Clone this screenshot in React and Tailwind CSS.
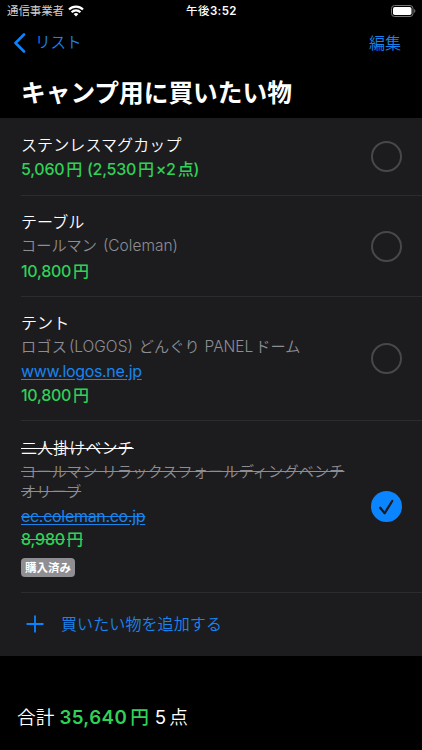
const items = [
  {
    height: 'h-[78px]',
    title: 'ステンレスマグカップ',
    price: [['5,060'], ['円', 'ml-[2px]'], ['(2,530', 'ml-[5px]'], ['円', 'ml-[2px]'], ['×2', 'ml-[2px]'], ['点', 'ml-[2px]'], [')']],
  },
  {
    height: 'h-[101px]',
    title: 'テーブル',
    note: [['コールマン'], ['(Coleman)', 'ml-[6px] text-[15.5px]']],
    price: [['10,800'], ['円', 'ml-[2px]']],
  },
  {
    height: 'h-[124px]',
    title: 'テント',
    note: [['ロゴス'], ['(LOGOS)', 'ml-[2px] text-[15.5px]'], ['どんぐり', 'ml-[6px]'], ['PANEL', 'ml-[5px] text-[15.5px]'], ['ドーム', 'ml-[2px]']],
    link: 'www.logos.ne.jp',
    price: [['10,800'], ['円', 'ml-[2px]']],
  },
]

const FONT = "font-['Inter','Noto_Sans_CJK_JP',sans-serif]"

function Parts({ parts }) {
  return parts.map(([text, gap = ''], i) => (
    <span key={i} className={gap}>{text}</span>
  ))
}

function Item({ item }) {
  return (
    <li className={`ml-[21px] pr-[20.5px] flex items-center justify-between border-b border-[#2c2c2f] ${item.height}`}>
      <div className="whitespace-nowrap pt-px text-[16px] leading-[24.2px]">
        <h2 className="font-[350] tracking-[0.1px] text-white">{item.title}</h2>
        {item.note && <p className="flex text-[15.2px] font-[350] text-[#8d8d93]"><Parts parts={item.note} /></p>}
        {item.link && <a className="block w-fit tracking-[-0.33px] text-[#1a84ee] underline underline-offset-2">{item.link}</a>}
        <p className="flex font-medium tracking-[-0.28px] text-[#30d158]"><Parts parts={item.price} /></p>
      </div>
      <span className="size-[31px] rounded-full border-2 border-[#48484a]" />
    </li>
  )
}

function BoughtItem() {
  return (
    <li className="ml-[21px] pr-[20.5px] h-[172px] flex items-center justify-between border-b border-[#2c2c2f]">
      <div className="whitespace-nowrap text-[16px] leading-[24px]">
        <h2 className="w-fit font-[350] tracking-[0.1px] text-white line-through">二人掛けベンチ</h2>
        <p className="w-fit pt-[2px] text-[15.2px] font-[350] leading-[20px] tracking-[0.08px] text-[#8d8d93] line-through">
          コールマン リラックスフォールディングベンチ<br />オリーブ
        </p>
        <a className="mt-[2px] block w-fit tracking-[-0.3px] text-[#1a84ee] [text-decoration:underline_line-through] underline-offset-2">ec.coleman.co.jp</a>
        <p className="-mt-px w-fit font-medium tracking-[-0.2px] text-[#30d158] line-through">8,980<span className="pl-[2px]">円</span></p>
        <span className="mt-[7px] flex h-[19px] w-[54px] items-center justify-center rounded-[4px] bg-[#8e8e93] text-[11.5px] font-bold text-white">購入済み</span>
      </div>
      <svg className="size-[31px]" viewBox="0 0 31 31" fill="none">
        <circle cx="15.5" cy="15.5" r="15.5" fill="#0a84ff" />
        <path d="M9.2 16.8 13.7 22.2 21.2 10" stroke="#1c1c1e" strokeWidth="2.3" strokeLinecap="round" strokeLinejoin="round" />
      </svg>
    </li>
  )
}

export default function App() {
  return (
    <main lang="ja" className={`flex h-[750px] w-[422px] flex-col overflow-hidden bg-black text-white ${FONT}`}>
      <div className="grid h-[22px] grid-cols-3 items-center pl-[7px] pr-[6px] text-[11.5px] leading-[22px]">
        <div className="flex items-center gap-[4px] text-[#d0d0d0]">
          <span className="tracking-[-0.1px]">通信事業者</span>
          <svg className="h-[12px] w-[16px]" viewBox="0 0 16 12" fill="none" stroke="#fff" strokeWidth="2.2">
            <path d="M1 4.5a10 10 0 0 1 14 0M3.6 7.3a6.2 6.2 0 0 1 8.8 0" />
            <path d="M8 11.6 5.6 9.1a3.5 3.5 0 0 1 4.8 0Z" fill="#fff" stroke="none" />
          </svg>
        </div>
        <span className="text-center font-medium tracking-[0.4px]">午後<span className="font-semibold">3:52</span></span>
        <svg className="h-[12px] w-[25px] justify-self-end" viewBox="0 0 25 12" fill="none">
          <rect x=".5" y=".5" width="21.5" height="11" rx="3" stroke="#777" />
          <rect x="2" y="2" width="18.5" height="8" rx="1.8" fill="#fff" />
          <path d="M23.2 4v4c1.6-.6 1.6-3.4 0-4Z" fill="#777" />
        </svg>
      </div>
      <nav className="flex h-[43px] items-center justify-between pb-px pl-[14px] pr-[21px] text-[16px] leading-[24px] text-[#1a84ee]">
        <div className="flex items-center gap-[9px]">
          <svg className="h-[20px] w-[12px]" viewBox="0 0 12 20" fill="none" stroke="#0a84ff" strokeWidth="2.6" strokeLinecap="round" strokeLinejoin="round">
            <path d="m10 1.5-8.5 8.5 8.5 8.5" />
          </svg>
          <span className="text-[15.5px] font-[350]">リスト</span>
        </div>
        <span className="font-[350]">編集</span>
      </nav>
      <h1 className="h-[53px] whitespace-nowrap pl-[21px] text-[24.7px] font-semibold leading-[57px]">キャンプ用に買いたい物</h1>
      <ul className="h-[538px] bg-[#1c1c1e]">
        {items.map((item) => <Item key={item.title} item={item} />)}
        <BoughtItem />
        <li className="flex h-[62px] items-center pl-[26px] text-[16px] text-[#1a84ee]">
          <svg className="size-[18px]" viewBox="0 0 18 18" stroke="#0a84ff" strokeWidth="1.8" strokeLinecap="round">
            <path d="M9 1.2v15.6M1.2 9h15.6" />
          </svg>
          <span className="ml-[17px] font-[350] tracking-[0.1px]">買いたい物を追加する</span>
        </li>
      </ul>
      <footer className="flex h-[94px] items-center pl-[17px] pt-[30px] text-[18.7px] leading-[28px]">
        <span className="font-[350]">合計</span>
        <strong className="ml-[5px] flex font-semibold text-[#30d158]"><span className="tracking-[0.4px]">35,640</span><span className="ml-[3px] font-medium">円</span></strong>
        <span className="ml-[6px]">5</span><span className="ml-[3px] font-[350]">点</span>
      </footer>
    </main>
  )
}
